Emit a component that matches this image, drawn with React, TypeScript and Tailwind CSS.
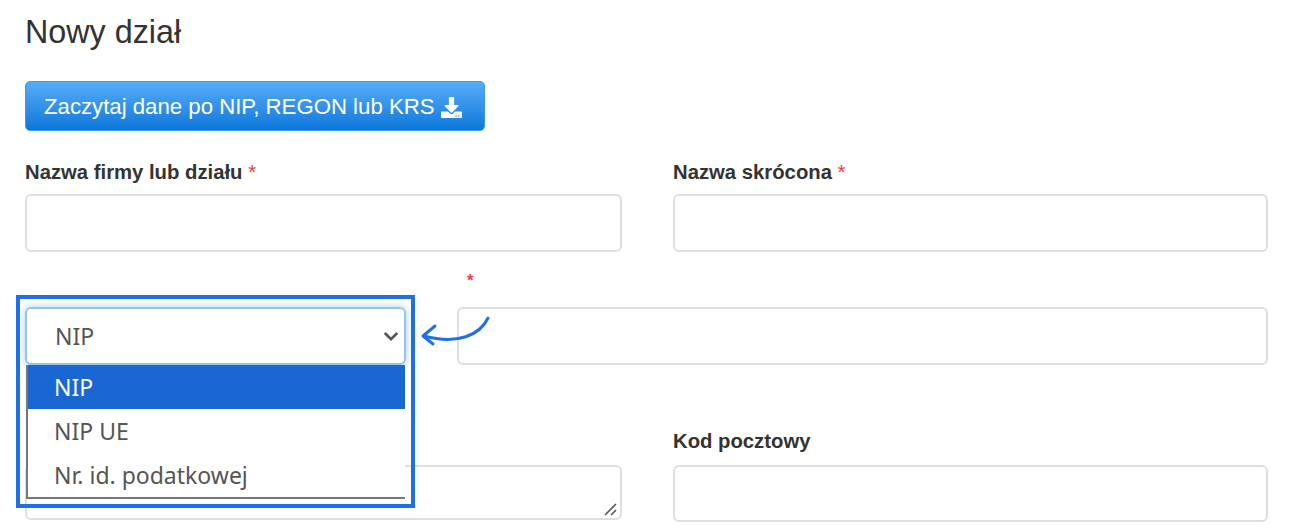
import { FaDownload } from 'react-icons/fa';

const fieldClass =
  'block w-full rounded-[6px] border-2 border-[#dfdfdf] bg-white outline-none';
const labelClass = 'text-[20.3px] leading-[24px] font-bold text-[#333]';

function Star() {
  return <span className="font-normal text-[#f03c3c]">*</span>;
}

export default function App() {
  return (
    <div className="relative h-[531px] w-[1302px] overflow-hidden bg-white pr-[34px] pl-[25px] font-['Liberation_Sans',Arial,sans-serif]">
      <h3 className="pt-[14px] text-[32.3px] leading-[36px] font-normal text-[#333]">
        Nowy dział
      </h3>

      <button
        type="button"
        className="mt-[31px] flex h-[50px] w-[460px] items-center rounded-[5px] border border-[#3a9ae8] bg-gradient-to-b from-[#54adf9] to-[#0577da] pt-[2px] pl-[18px] text-[22.2px] text-white"
      >
        Zaczytaj dane po NIP, REGON lub KRS
        <FaDownload className="ml-[6px] h-[21px] w-[21px]" />
      </button>

      <div className="mt-[29px] grid grid-cols-[597px_595px] gap-x-[51px]">
        <div>
          <label className={labelClass}>
            Nazwa firmy lub działu <Star />
          </label>
          <input className={`${fieldClass} mt-[8px] h-[58px]`} />
        </div>
        <div>
          <label className={labelClass}>
            Nazwa skrócona <Star />
          </label>
          <input className={`${fieldClass} mt-[8px] h-[58px]`} />
        </div>
      </div>

      <div className="mt-[55px] grid grid-cols-[381px_811px] gap-x-[51px]">
        <div className="relative flex h-[58px] items-center justify-between rounded-[6px] border-2 border-[#93c6ea] bg-white pr-[5px] pl-[28px] font-['Noto_Sans',sans-serif] text-[23px] text-[#555] shadow-[0_0_8px_rgba(102,175,233,0.6)]">
          NIP
          <svg width="16" height="11" viewBox="0 0 18 12" fill="none" stroke="#555" strokeWidth="3">
            <path d="M2 2l7 7 7-7" />
          </svg>
        </div>
        <div className="relative">
          <span className="absolute top-[-36px] left-[10px] text-[17px] leading-[20px] font-bold text-[#f03c3c]">*</span>
          <input className={`${fieldClass} h-[58px]`} />
        </div>
      </div>

      <div className="mt-[64px] grid grid-cols-[597px_595px] gap-x-[51px]">
        <div className="relative mt-[36px] h-[55px] rounded-[6px] border-2 border-[#dfdfdf] bg-white">
          <svg className="absolute right-[2px] bottom-[2px]" width="14" height="14" viewBox="0 0 14 14" fill="none" stroke="#555" strokeWidth="1.6">
            <path d="M1 13L12 2M7 13l5-5" />
          </svg>
        </div>
        <div>
          <label className={labelClass}>Kod pocztowy</label>
          <input className={`${fieldClass} mt-[10px] h-[57px]`} />
        </div>
      </div>

      {/* dropdown list opened over the form */}
      <div className="absolute top-[365px] left-[26px] w-[379px] border-b-2 border-l-2 border-[#777] bg-white font-['Noto_Sans',sans-serif] text-[23px] text-[#555]">
        <div className="flex h-[44px] items-center bg-[#1a66d2] pl-[26px] text-white">NIP</div>
        <div className="flex h-[44px] items-center pl-[26px]">NIP UE</div>
        <div className="flex h-[44px] items-center pl-[26px]">Nr. id. podatkowej</div>
      </div>

      {/* highlight frame and arrow added to the screenshot */}
      <div className="pointer-events-none absolute top-[295px] left-[16px] h-[213px] w-[399px] border-[4px] border-[#1f6fe8]" />
      <svg className="pointer-events-none absolute top-[315px] left-[418px]" width="74" height="36" viewBox="0 0 74 36" fill="none" stroke="#1f6fe8" strokeWidth="3" strokeLinecap="round" strokeLinejoin="round">
        <path d="M70 3C62 20 40 30 6 21" />
        <path d="M17 11L5 21l10 8" />
      </svg>
    </div>
  );
}
